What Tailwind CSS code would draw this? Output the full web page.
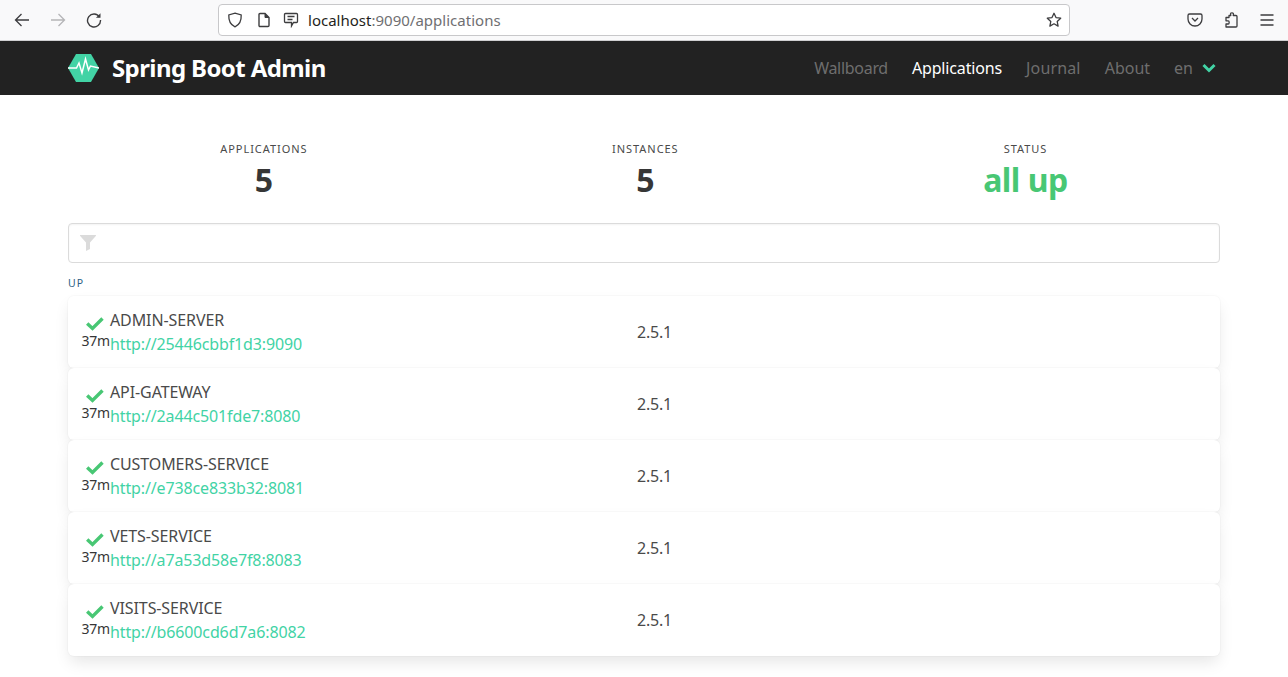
<!DOCTYPE html>
<html lang="en"><head><meta charset="utf-8"><title>Spring Boot Admin</title>
<script src="https://cdn.jsdelivr.net/npm/@tailwindcss/browser@4"></script></head>
<body class="bg-white font-['Noto_Sans',sans-serif] text-[#363636]">
<div class="h-[41px] bg-[#f9f9fa] border-b border-[#cfcfd1] flex items-center text-[#3d3d3f]">
  <div class="flex items-center gap-[20px] pl-[14px] w-[218px]">
    <svg class="w-4 h-4" viewBox="0 0 16 16" fill="none" stroke="currentColor" stroke-width="1.3"><path d="M15 8H1.500M7.500 2 1.500 8l6 6"/></svg>
    <svg class="w-4 h-4 text-[#b5b5b7]" viewBox="0 0 16 16" fill="none" stroke="currentColor" stroke-width="1.3"><path d="M1 8h13.500M8.500 2l6 6-6 6"/></svg>
    <svg class="w-4 h-4" viewBox="0 0 16 16" fill="none" stroke="currentColor" stroke-width="1.4"><path d="M13.500 5A6.500 6.500 0 1 0 14.500 8"/><path d="M14.500 1.200v4.600H9.900z" fill="currentColor" stroke="none"/></svg>
  </div>
  <div class="w-[852px] h-[32px] bg-white border border-[#c8c8ca] rounded-[4px] flex items-center pl-[8px] pr-[7px] -mt-[1px]">
    <svg class="w-4 h-4 shrink-0" viewBox="0 0 16 16" fill="none" stroke="currentColor" stroke-width="1.3"><path d="M8 1.200 14.200 3c.3 6-1.700 9.800-6.200 11.800C3.500 12.800 1.500 9 1.800 3z"/></svg>
    <svg class="w-4 h-4 ml-[13px] shrink-0" viewBox="0 0 16 16" fill="none" stroke="currentColor" stroke-width="1.4"><path d="M3 2.500a1 1 0 0 1 1-1h5l4 4v8a1 1 0 0 1-1 1H4a1 1 0 0 1-1-1z"/><path d="M9 1.500v4h4" fill="currentColor" stroke-width="1"/></svg>
    <svg class="w-4 h-4 ml-[11px] shrink-0" viewBox="0 0 16 16" fill="none" stroke="currentColor" stroke-width="1.3"><path d="M2.500 1.500h11a1 1 0 0 1 1 1v7a1 1 0 0 1-1 1h-3L8.500 14v-3.500h-6a1 1 0 0 1-1-1v-7a1 1 0 0 1 1-1z"/><path d="M4.500 4.500h7M4.500 7.500h5"/></svg>
    <span class="ml-[9px] mt-[1px] text-[15px] text-[#1f1f21] tracking-[0.01px]">localhost<span class="text-[#6f6f72]">:9090/applications</span></span>
    <svg class="w-4 h-4 ml-auto" viewBox="0 0 16 16" fill="none" stroke="currentColor" stroke-width="1.300" stroke-linejoin="round"><path d="m8 1.300 2 4.300 4.700.6-3.500 3.200.9 4.700L8 11.800l-4.100 2.300.9-4.700L1.300 6.200 6 5.600z"/></svg>
  </div>
  <div class="flex items-center ml-[117px] gap-[20px]">
    <svg class="w-4 h-4" viewBox="0 0 16 16" fill="none" stroke="currentColor" stroke-width="1.300"><path d="M2.500 2h11A1.500 1.500 0 0 1 15 3.500V7a7 7 0 0 1-14 0V3.500A1.500 1.500 0 0 1 2.500 2z"/><path d="m5 6 3 3 3-3"/></svg>
    <svg class="w-4 h-4" viewBox="0 0 16 16" fill="none" stroke="currentColor" stroke-width="1.300" stroke-linejoin="round"><path d="M6 3.500h1.800C7 1 8 .8 9 .8s2 .4 1.200 2.700H13a1 1 0 0 1 1 1V14a1 1 0 0 1-1 1H3v-3h2.200c1.300 0 1.300-3.200 0-3.200H3V5.500h3z"/></svg>
    <svg class="w-4 h-4" viewBox="0 0 16 16" fill="none" stroke="currentColor" stroke-width="1.300"><path d="M1.500 3h13M1.500 8h13M1.500 13h13"/></svg>
  </div>
</div>
<nav class="h-[54px] bg-[#222222] flex items-center pl-[68px] pr-[72px]">
  <svg class="w-[31px] h-[28px] shrink-0" viewBox="0 0 31 28"><path d="M8 0h15l8 14-8 14H8L0 14z" fill="#42d3a5"/><path d="M0 14h6l2.500 0 2.500-5 3 10 3.500-14 3 11 2-4 8.500 2" fill="none" stroke="#fff" stroke-width="1.500"/></svg>
  <span class="ml-[13px] text-[24px] font-bold text-white tracking-[-0.6px]">Spring Boot Admin</span>
  <div class="ml-auto flex items-center gap-[24px] text-[16px] text-[#6e6e6e]">
    <span class="tracking-[-0.3px]">Wallboard</span><span class="text-white tracking-[-0.15px]">Applications</span><span class="tracking-[0.15px]">Journal</span><span>About</span>
    <span class="flex items-center gap-[9px]">en<svg class="w-[14px] h-[10px]" viewBox="0 0 14 10" fill="none" stroke="#42d3a5" stroke-width="3"><path d="m1.500 2 5.500 5.500L12.500 2"/></svg></span>
  </div>
</nav>
<main class="px-[68px] pb-[21px]">
  <section class="flex justify-around text-center pt-[46px] h-[128px]">
    <div><p class="text-[11px] tracking-[0.95px] leading-[16px] text-[#4a4a4a] uppercase">Applications</p><p class="mt-[3px] text-[32px] font-bold leading-[40px] text-[#363636]">5</p></div>
    <div><p class="text-[11px] tracking-[0.95px] leading-[16px] text-[#4a4a4a] uppercase">Instances</p><p class="mt-[3px] text-[32px] font-bold leading-[40px] text-[#363636]">5</p></div>
    <div><p class="text-[11px] tracking-[0.95px] leading-[16px] text-[#4a4a4a] uppercase">Status</p><p class="mt-[3px] text-[32px] font-bold leading-[40px] text-[#48c774] tracking-[-0.5px]">all up</p></div>
  </section>
  <div class="h-[40px] border border-[#dbdbdb] rounded-[4px] flex items-center pl-[11px] shadow-[inset_0_1px_2px_rgba(10,10,10,0.05)]">
    <svg class="w-[16px] h-[16px] text-[#dbdbdb]" viewBox="0 0 16 16" fill="currentColor"><path d="M.5 0h15c.5 0 .7.6.300 1L10 7.500V14l-4 2V7.500L.200 1C-.2.600 0 0 .5 0z"/></svg>
  </div>
  <h2 class="mt-[13px] mb-[6px] text-[10.500px] leading-[14px] tracking-[1px] text-[#2c5f85] uppercase">Up</h2>
  <div class="flex flex-col">
    <div class="h-[72px] rounded-[6px] bg-white shadow-[0_8px_16px_-2px_rgba(10,10,10,0.1),0_0_0_1px_rgba(10,10,10,0.02)] flex items-center">
      <div class="w-[569px] pl-[13px] flex">
        <div class="w-[29px] flex flex-col items-end pt-[9px]"><svg class="w-[18px] h-[14px] mr-[6px]" viewBox="0 0 18 14" fill="none" stroke="#48c774" stroke-width="3.400"><path d="m1.200 6.500 5.300 5 10-10"/></svg><span class="text-[14px] leading-[20px] tracking-[-0.2px] text-[#363636]">37m</span></div>
        <div class="text-[16px] leading-[24px]"><p class="text-[#4a4a4a] tracking-[-0.1px]">ADMIN-SERVER</p><p class="text-[#42d3a5] tracking-[-0.13px]">http://25446cbbf1d3:9090</p></div>
      </div>
      <div class="text-[16px] text-[#4a4a4a] tracking-[-0.2px]">2.5.1</div>
    </div>
    <div class="h-[72px] rounded-[6px] bg-white shadow-[0_8px_16px_-2px_rgba(10,10,10,0.1),0_0_0_1px_rgba(10,10,10,0.02)] flex items-center">
      <div class="w-[569px] pl-[13px] flex">
        <div class="w-[29px] flex flex-col items-end pt-[9px]"><svg class="w-[18px] h-[14px] mr-[6px]" viewBox="0 0 18 14" fill="none" stroke="#48c774" stroke-width="3.400"><path d="m1.200 6.500 5.300 5 10-10"/></svg><span class="text-[14px] leading-[20px] tracking-[-0.2px] text-[#363636]">37m</span></div>
        <div class="text-[16px] leading-[24px]"><p class="text-[#4a4a4a] tracking-[-0.1px]">API-GATEWAY</p><p class="text-[#42d3a5] tracking-[-0.13px]">http://2a44c501fde7:8080</p></div>
      </div>
      <div class="text-[16px] text-[#4a4a4a] tracking-[-0.2px]">2.5.1</div>
    </div>
    <div class="h-[72px] rounded-[6px] bg-white shadow-[0_8px_16px_-2px_rgba(10,10,10,0.1),0_0_0_1px_rgba(10,10,10,0.02)] flex items-center">
      <div class="w-[569px] pl-[13px] flex">
        <div class="w-[29px] flex flex-col items-end pt-[9px]"><svg class="w-[18px] h-[14px] mr-[6px]" viewBox="0 0 18 14" fill="none" stroke="#48c774" stroke-width="3.400"><path d="m1.200 6.500 5.300 5 10-10"/></svg><span class="text-[14px] leading-[20px] tracking-[-0.2px] text-[#363636]">37m</span></div>
        <div class="text-[16px] leading-[24px]"><p class="text-[#4a4a4a] tracking-[-0.1px]">CUSTOMERS-SERVICE</p><p class="text-[#42d3a5] tracking-[-0.13px]">http://e738ce833b32:8081</p></div>
      </div>
      <div class="text-[16px] text-[#4a4a4a] tracking-[-0.2px]">2.5.1</div>
    </div>
    <div class="h-[72px] rounded-[6px] bg-white shadow-[0_8px_16px_-2px_rgba(10,10,10,0.1),0_0_0_1px_rgba(10,10,10,0.02)] flex items-center">
      <div class="w-[569px] pl-[13px] flex">
        <div class="w-[29px] flex flex-col items-end pt-[9px]"><svg class="w-[18px] h-[14px] mr-[6px]" viewBox="0 0 18 14" fill="none" stroke="#48c774" stroke-width="3.400"><path d="m1.200 6.500 5.300 5 10-10"/></svg><span class="text-[14px] leading-[20px] tracking-[-0.2px] text-[#363636]">37m</span></div>
        <div class="text-[16px] leading-[24px]"><p class="text-[#4a4a4a] tracking-[-0.1px]">VETS-SERVICE</p><p class="text-[#42d3a5] tracking-[-0.13px]">http://a7a53d58e7f8:8083</p></div>
      </div>
      <div class="text-[16px] text-[#4a4a4a] tracking-[-0.2px]">2.5.1</div>
    </div>
    <div class="h-[72px] rounded-[6px] bg-white shadow-[0_8px_16px_-2px_rgba(10,10,10,0.1),0_0_0_1px_rgba(10,10,10,0.02)] flex items-center">
      <div class="w-[569px] pl-[13px] flex">
        <div class="w-[29px] flex flex-col items-end pt-[9px]"><svg class="w-[18px] h-[14px] mr-[6px]" viewBox="0 0 18 14" fill="none" stroke="#48c774" stroke-width="3.400"><path d="m1.200 6.500 5.300 5 10-10"/></svg><span class="text-[14px] leading-[20px] tracking-[-0.2px] text-[#363636]">37m</span></div>
        <div class="text-[16px] leading-[24px]"><p class="text-[#4a4a4a] tracking-[-0.1px]">VISITS-SERVICE</p><p class="text-[#42d3a5] tracking-[-0.13px]">http://b6600cd6d7a6:8082</p></div>
      </div>
      <div class="text-[16px] text-[#4a4a4a] tracking-[-0.2px]">2.5.1</div>
    </div>
  </div>
</main>
</body></html>
